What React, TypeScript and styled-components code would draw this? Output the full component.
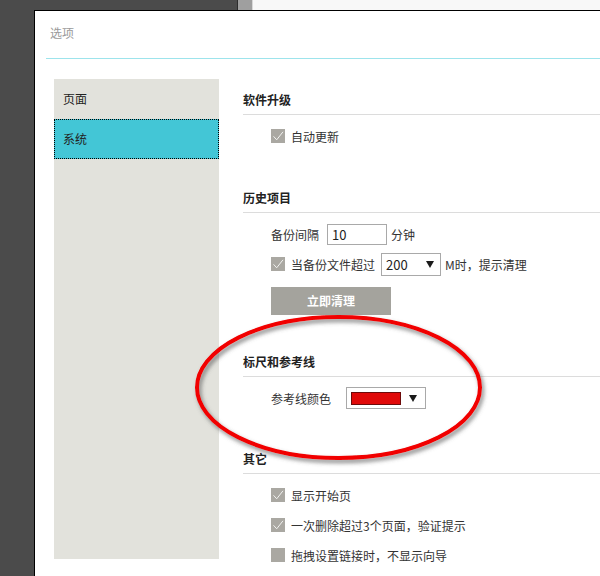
import React from "react";
import styled, { createGlobalStyle } from "styled-components";

const GlobalStyle = createGlobalStyle`
  html, body {
    margin: 0;
    padding: 0;
    background: #4b4b4b;
  }
  body {
    font-family: "Noto Sans CJK SC", "Noto Sans", sans-serif;
    font-size: 12px;
    color: #333;
  }
`;

const App: React.FC = () => {
  return (
    <Page>
      <GlobalStyle />
      <TopStrip>
        <StripDark />
        <StripThumb />
        <StripLight />
      </TopStrip>

      <Dialog>
        <Header>选项</Header>
        <HeaderLine />

        <Body>
          {/* left menu */}
          <Sidebar>
            <MenuItem>页面</MenuItem>
            <MenuItem $active>系统</MenuItem>
          </Sidebar>

          {/* settings */}
          <Content>
            <Section>
              <SectionTitle>软件升级</SectionTitle>
              <Items>
                <Row>
                  <Checkbox checked />
                  <span>自动更新</span>
                </Row>
              </Items>
            </Section>

            <Section>
              <SectionTitle>历史项目</SectionTitle>
              <Items>
                <Row>
                  <span>备份间隔</span>
                  <TextInput>10</TextInput>
                  <span>分钟</span>
                </Row>
                <Row>
                  <Checkbox checked />
                  <span>当备份文件超过</span>
                  <Select>
                    <span>200</span>
                    <Arrow />
                  </Select>
                  <span>M时，提示清理</span>
                </Row>
                <Button>立即清理</Button>
              </Items>
            </Section>

            <Section $space={36}>
              <SectionTitle>标尺和参考线</SectionTitle>
              <Items>
                <Row>
                  <span>参考线颜色</span>
                  <ColorSelect>
                    <Swatch />
                    <Arrow />
                  </ColorSelect>
                </Row>
              </Items>
            </Section>

            <Section>
              <SectionTitle>其它</SectionTitle>
              <Items>
                <Row>
                  <Checkbox checked />
                  <span>显示开始页</span>
                </Row>
                <Row>
                  <Checkbox checked />
                  <span>一次删除超过3个页面，验证提示</span>
                </Row>
                <Row>
                  <Checkbox />
                  <span>拖拽设置链接时，不显示向导</span>
                </Row>
              </Items>
            </Section>
          </Content>
        </Body>
      </Dialog>

      {/* red annotation ring */}
      <Annotation width="600" height="576" viewBox="0 0 600 576">
        <defs>
          <filter id="ringShadow" x="-10%" y="-20%" width="120%" height="140%">
            <feDropShadow dx="2" dy="3" stdDeviation="2" floodColor="#555" floodOpacity="0.7" />
          </filter>
        </defs>
        <ellipse
          cx="338.5"
          cy="387.5"
          rx="141.5"
          ry="70.5"
          fill="none"
          stroke="#f10000"
          strokeWidth="4"
          filter="url(#ringShadow)"
        />
      </Annotation>
    </Page>
  );
};

const Checkbox: React.FC<{ checked?: boolean }> = ({ checked }) => (
  <Box>
    {checked && (
      <svg width="14" height="14" viewBox="0 0 14 14">
        <polyline points="2.5,7.3 5.7,10.8 12,2.8" fill="none" stroke="#f2f2f0" strokeWidth="1" />
      </svg>
    )}
  </Box>
);

const Page = styled.div`
  position: relative;
  width: 600px;
  height: 576px;
  overflow: hidden;
  background: #4b4b4b;
  display: flex;
  flex-direction: column;
`;

const TopStrip = styled.div`
  display: flex;
  height: 10px;
  flex-shrink: 0;
`;

const StripDark = styled.div`
  width: 237px;
  background: #4b4b4b;
  border-right: 1px solid #2c2c2c;
`;

const StripThumb = styled.div`
  width: 14px;
  background: #9f9f9f;
  border-right: 1px solid #d8d8d8;
`;

const StripLight = styled.div`
  flex: 1;
  background: #f8f8f8;
`;

const Dialog = styled.div`
  flex: 1;
  width: 620px;
  margin-left: 34px;
  background: #fff;
  border-left: 1px solid #000;
  border-top: 1px solid #000;
`;

const Header = styled.div`
  height: 34px;
  padding: 13px 0 0 15px;
  line-height: 18px;
  font-size: 12px;
  color: #9a9a9a;
`;

const HeaderLine = styled.div`
  height: 1px;
  margin-left: 11px;
  background: #9de4ec;
`;

const Body = styled.div`
  display: flex;
  gap: 24px;
  padding: 20px 0 0 19px;
`;

const Sidebar = styled.div`
  width: 165px;
  height: 480px;
  flex-shrink: 0;
  background: #e2e2dc;
`;

const MenuItem = styled.div<{ $active?: boolean }>`
  height: 40px;
  line-height: 40px;
  padding-left: 9px;
  font-size: 12px;
  color: #222;
  background: ${(p) => (p.$active ? "#43c6d6" : "transparent")};
  outline: ${(p) => (p.$active ? "1px dotted #000" : "none")};
  outline-offset: -1px;
`;

const Content = styled.div`
  flex: 1;
  padding-top: 11px;
`;

const Section = styled.div<{ $space?: number }>`
  margin-bottom: ${(p) => p.$space ?? 37}px;
`;

const SectionTitle = styled.div`
  line-height: 20px;
  padding-bottom: 4px;
  border-bottom: 1px solid #dcdcdc;
  font-size: 12px;
  font-weight: bold;
  color: #222;
`;

const Items = styled.div`
  padding: 6px 0 0 28px;
`;

const Row = styled.div`
  display: flex;
  align-items: center;
  gap: 4px;
  height: 30px;
  white-space: nowrap;
`;

const Box = styled.span`
  display: inline-flex;
  width: 14px;
  height: 14px;
  margin-right: 2px;
  background: #aaa8a2;
`;

const TextInput = styled.div`
  box-sizing: border-box;
  width: 60px;
  height: 21px;
  margin-left: 4px;
  padding-left: 4px;
  border: 1px solid #a9a9a9;
  font-size: 13px;
  line-height: 19px;
  color: #222;
`;

const Select = styled.div`
  box-sizing: border-box;
  display: flex;
  align-items: center;
  justify-content: space-between;
  width: 60px;
  height: 23px;
  margin-left: 2px;
  padding: 0 6px 0 4px;
  border: 1px solid #a9a9a9;
  font-size: 13px;
  color: #222;
`;

const ColorSelect = styled(Select)`
  width: 80px;
  height: 22px;
  margin-left: 11px;
  padding: 0 8px 0 4px;
`;

const Arrow = styled.span`
  width: 0;
  height: 0;
  border-left: 4px solid transparent;
  border-right: 4px solid transparent;
  border-top: 7px solid #1a1a1a;
`;

const Swatch = styled.span`
  box-sizing: border-box;
  width: 50px;
  height: 13px;
  background: #e00909;
  border: 1px solid #6c0a0a;
`;

const Button = styled.div`
  width: 120px;
  height: 28px;
  margin: 8px 0 1px;
  background: #a4a39d;
  color: #fff;
  font-size: 12px;
  font-weight: bold;
  line-height: 28px;
  text-align: center;
`;

const Annotation = styled.svg`
  position: absolute;
  left: 0;
  top: 0;
  pointer-events: none;
`;

export default App;
